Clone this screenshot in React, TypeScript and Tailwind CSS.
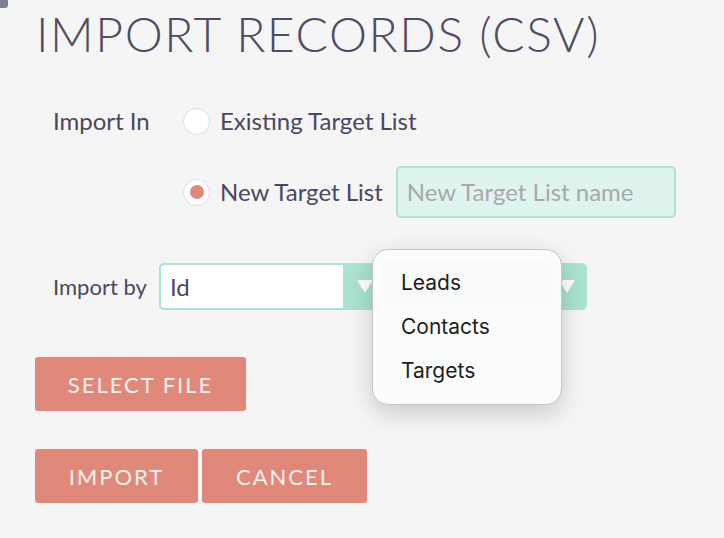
const lato = { fontFamily: 'Lato, "Open Sans", sans-serif' }

function Radio({ checked }: { checked?: boolean }) {
  return (
    <span className="flex h-[27px] w-[27px] shrink-0 items-center justify-center rounded-full border border-[#d9dee5] bg-white">
      {checked && <span className="h-[14px] w-[14px] rounded-full bg-[#e0897b]" />}
    </span>
  )
}

function Caret() {
  return (
    <svg width="16" height="13" viewBox="0 0 16 13" className="shrink-0">
      <path d="M0 0 L16 0 L8 13 Z" fill="#ffffff" />
    </svg>
  )
}

export default function App() {
  const menuItems = ['Leads', 'Contacts', 'Targets']

  return (
    <div className="relative min-h-[538px] w-[724px] overflow-hidden bg-[#f5f5f5] text-[#4a4760]" style={lato}>
      <div className="absolute left-0 top-0 h-[8px] w-[8px] rounded-br-[3px] bg-[#7a828d]" />

      <h1 className="ml-[36px] mt-[10px] text-[48px] font-light leading-none tracking-[1.6px] text-[#4f4c63]">
        IMPORT RECORDS (CSV)
      </h1>

      <div className="ml-[53px] mt-[43px] flex h-[40px] items-center">
        <span className="w-[130px] text-[24px]">Import In</span>
        <Radio />
        <span className="ml-[10px] text-[24px]">Existing Target List</span>
      </div>

      <div className="ml-[183px] mt-[25px] flex h-[52px] items-center">
        <Radio checked />
        <span className="ml-[10px] text-[24px]">New Target List</span>
        <div className="ml-[13px] flex h-[52px] w-[280px] items-center rounded-[5px] border-2 border-[#ade3d4] bg-[#dff4ee] px-[9px] text-[24px] text-[#a8a8a8]">
          New Target List name
        </div>
      </div>

      <div className="relative ml-[53px] mt-[45px] flex h-[47px] items-center">
        <span className="w-[106px] text-[22px]">Import by</span>
        <div className="flex h-[47px] w-[428px] overflow-hidden rounded-[5px] border-2 border-[#abe2d2] bg-[#abe2d2]">
          <div className="flex w-[182px] items-center rounded-l-[3px] bg-white pl-[9px] text-[24px]">Id</div>
          <div className="flex flex-1 items-center justify-between pl-[14px] pr-[10px]">
            <Caret />
            <Caret />
          </div>
        </div>

        <div
          className="absolute left-[319px] top-[-14px] w-[190px] rounded-[16px] border border-[#c4c4c4] bg-[#fbfcfc] px-[8px] py-[11px] shadow-[0_8px_24px_rgba(0,0,0,0.18)]"
          style={{ fontFamily: 'Inter, "Liberation Sans", sans-serif' }}
        >
          {menuItems.map((item, i) => (
            <div
              key={item}
              className={`flex h-[44px] items-center rounded-[10px] px-[20px] text-[21px] text-[#1e1e1e] ${
                i === 0 ? 'bg-[#f8fafa]' : ''
              }`}
            >
              {item}
            </div>
          ))}
        </div>
      </div>

      <div className="ml-[35px] mt-[47px]">
        <button className="h-[54px] w-[211px] rounded-[3px] bg-[#e0897b] text-[22px] tracking-[0.09em] text-[#fbf1ef]">
          SELECT FILE
        </button>
      </div>

      <div className="ml-[35px] mt-[38px] flex gap-[4px]">
        <button className="h-[54px] w-[163px] rounded-[3px] bg-[#e0897b] text-[22px] tracking-[0.09em] text-[#fbf1ef]">
          IMPORT
        </button>
        <button className="h-[54px] w-[165px] rounded-[3px] bg-[#e0897b] text-[22px] tracking-[0.09em] text-[#fbf1ef]">
          CANCEL
        </button>
      </div>
    </div>
  )
}
